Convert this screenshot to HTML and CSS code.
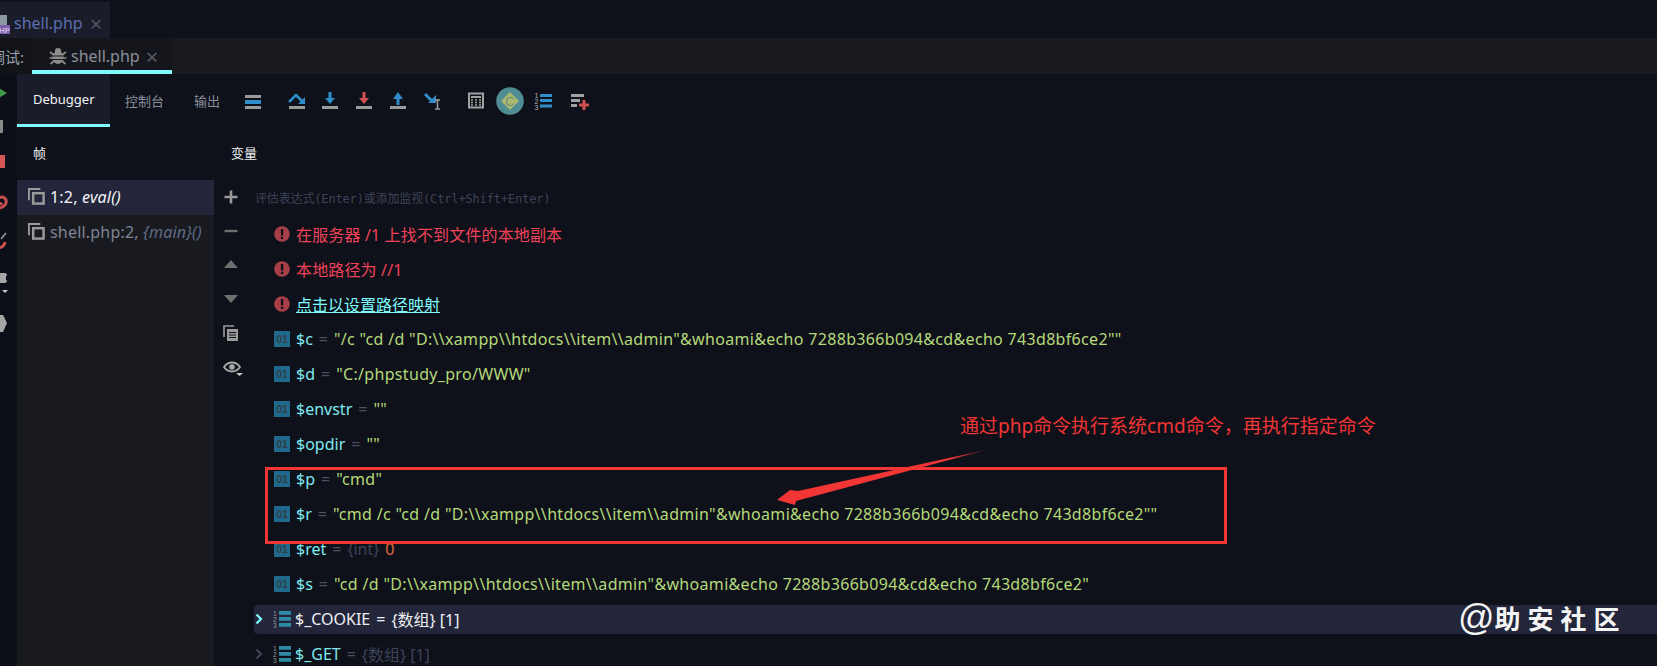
FILE: index.html
```html
<!DOCTYPE html>
<html lang="zh-CN">
<head>
<meta charset="utf-8">
<title>shell.php</title>
<link rel="stylesheet" href="styles.css">
</head>
<body>
<svg class="sprite" aria-hidden="true">
  <defs>
    <symbol id="frame" viewBox="0 0 18 18"><path d="M1 13V1h12" fill="none" stroke="#9a9a9a" stroke-width="2"/><rect x="5.500" y="5.500" width="11" height="11" fill="none" stroke="#9a9a9a" stroke-width="2.600"/></symbol>
    <symbol id="err" viewBox="0 0 16 16"><circle cx="8" cy="8" r="7.800" fill="#a63f48"/><rect x="6.900" y="3" width="2.300" height="6.400" fill="#0e1119"/><rect x="6.900" y="10.700" width="2.300" height="2.300" fill="#0e1119"/></symbol>
    <symbol id="arr" viewBox="0 0 18 18"><text x="0" y="5.500" class="tiny">1</text><text x="0" y="11.500" class="tiny">2</text><text x="0" y="17.500" class="tiny">3</text><rect x="6" y="1" width="12" height="3.800" fill="#2f8aa6"/><rect x="6" y="7" width="12" height="3.800" fill="#2f8aa6"/><rect x="6" y="13" width="12" height="3.800" fill="#2f8aa6"/></symbol>
    <symbol id="chev" viewBox="0 0 8 12"><path d="M1.500 1.500L6 6l-4.500 4.500" fill="none" stroke="currentColor" stroke-width="2.200"/></symbol>
    <linearGradient id="tail" x1="1" y1="0" x2="0" y2="1"><stop offset="0" stop-color="#4a1418"/><stop offset=".18" stop-color="#f23535"/></linearGradient>
  </defs>
</svg>

<div class="filetabs">
  <div class="filetab">
    <svg class="phpicon" width="10" height="20" viewBox="0 0 10 20"><rect x="-6" y="0" width="13" height="11" fill="#8b99a3"/><rect x="-6" y="10" width="16" height="9" fill="#7e5fae"/><text x="-1" y="18" class="phptxt">HP</text></svg>
    <span class="filename">shell.php</span>
    <span class="close">×</span>
  </div>
</div>

<div class="debugbar">
  <div class="debuglabel"><span>调试:</span></div>
  <div class="debugtab">
    <svg width="18" height="18" viewBox="0 0 18 18"><ellipse cx="9" cy="10.500" rx="5.600" ry="6.500" fill="#8c8c8c"/><circle cx="9" cy="4.200" r="3.100" fill="#8c8c8c"/><path d="M1 5l4 3M17 5l-4 3M.5 11h4M17.500 11h-4M1.500 17l3.500-3M16.500 17l-3.500-3" stroke="#8c8c8c" stroke-width="1.700"/><path d="M4 9h10M4 12.500h10" stroke="#181a1f" stroke-width="1"/></svg>
    <span class="debugname">shell.php</span>
    <span class="close dim">×</span>
  </div>
</div>

<div class="main">
  <svg class="rail" width="17" height="592" viewBox="0 0 17 592">
    <polygon points="-3,13 7,19 -3,25" fill="#3f9a4c"/>
    <rect x="0" y="46" width="3" height="13" fill="#8a8a8a"/>
    <rect x="0" y="81" width="5" height="13" fill="#d65656"/>
    <path d="M-4 127c3-5 8-5 10-1 1 4-2 7-6 8M-3 131c2-2 4-2 5 0" fill="none" stroke="#c8504f" stroke-width="3"/>
    <path d="M-3 172c3 3 7 1 8-4" fill="none" stroke="#c8504f" stroke-width="3"/>
    <path d="M1 165l5-6" stroke="#9a9a9a" stroke-width="1.600"/>
    <rect x="0" y="199" width="6" height="10" fill="#a6a6a6"/>
    <path d="M0 201h7M0 207h7" stroke="#a6a6a6" stroke-width="1.500"/>
    <polygon points="2,216 8,216 5,219" fill="#c8c8c8"/>
    <polygon points="0,241 3,241 7,249 3,258 0,258" fill="#a6a6a6"/>
  </svg>

  <div class="content">
    <div class="toolbar">
      <div class="ttab active">Debugger</div>
      <div class="ttab">控制台</div>
      <div class="ttab">输出</div>
      <div class="tools">
        <svg class="tool" viewBox="0 0 24 24"><rect x="4" y="6" width="16" height="3" fill="#9a9a9a"/><rect x="4" y="11" width="16" height="4" fill="#2f8ec9"/><rect x="4" y="17" width="16" height="3" fill="#9a9a9a"/></svg>
        <svg class="tool gapl" viewBox="0 0 24 24"><path d="M5 13l7-7 7 7" fill="none" stroke="#2f8ec9" stroke-width="2.600"/><polygon points="21,8 21,15 14,15" fill="#2f8ec9"/><rect x="5" y="17" width="16" height="3" fill="#9a9a9a"/></svg>
        <svg class="tool" viewBox="0 0 24 24"><rect x="10.500" y="3" width="3" height="8" fill="#2f8ec9"/><polygon points="7,9 17,9 12,15" fill="#2f8ec9"/><rect x="4" y="17" width="16" height="3" fill="#9a9a9a"/></svg>
        <svg class="tool" viewBox="0 0 24 24"><rect x="10.500" y="3" width="3" height="8" fill="#d0504f"/><polygon points="7,9 17,9 12,15" fill="#d0504f"/><rect x="4" y="17" width="16" height="3" fill="#9a9a9a"/></svg>
        <svg class="tool" viewBox="0 0 24 24"><rect x="10.500" y="8" width="3" height="8" fill="#2f8ec9"/><polygon points="7,10 17,10 12,3" fill="#2f8ec9"/><rect x="4" y="17" width="16" height="3" fill="#9a9a9a"/></svg>
        <svg class="tool" viewBox="0 0 24 24"><path d="M5 5l8 8" stroke="#2f8ec9" stroke-width="3"/><polygon points="16,6 16,14 8,14" fill="#2f8ec9"/><path d="M15 11h5M17.500 11v9M15 20h5" stroke="#9a9a9a" stroke-width="1.500" fill="none"/></svg>
        <svg class="tool gapm" viewBox="0 0 24 24"><rect x="5" y="4.500" width="14" height="14" fill="none" stroke="#a0a0a0" stroke-width="2"/><path d="M7 8h10" stroke="#a0a0a0" stroke-width="2"/><path d="M7 11h2M11 11h2M15 11h2M7 13.500h2M11 13.500h2M15 13.500h2M7 16h2M11 16h2M15 16h2" stroke="#a0a0a0" stroke-width="1.500"/></svg>
        <svg class="tool wide" viewBox="0 0 28 28"><circle cx="14" cy="14" r="13.800" fill="#4f8c94"/><polygon points="14,5 23,14 14,23 5,14" fill="#a9b96e"/><text x="14" y="18.500" class="ctext">C</text></svg>
        <svg class="tool" viewBox="0 0 24 24"><text x="2.500" y="9" class="num">1</text><text x="2.500" y="15" class="num">2</text><text x="2.500" y="21" class="num">3</text><rect x="8" y="5" width="12" height="3" fill="#2f8ec9"/><rect x="8" y="10" width="12" height="3" fill="#2f8ec9"/><rect x="8" y="15.500" width="12" height="3" fill="#2f8ec9"/></svg>
        <svg class="tool gaps" viewBox="0 0 24 24"><rect x="3" y="5" width="13" height="3" fill="#a0a0a0"/><rect x="3" y="10" width="9" height="3" fill="#a0a0a0"/><rect x="3" y="15" width="6" height="3" fill="#a0a0a0"/><path d="M16 11v10M11 16h10" stroke="#d0504f" stroke-width="3"/></svg>
      </div>
    </div>

    <div class="panes">
      <div class="framespane">
        <div class="panehead">帧</div>
        <div class="framelist">
          <div class="frame selected"><svg class="frameicon"><use href="#frame"/></svg><span>1:2, <i>eval()</i></span></div>
          <div class="frame"><svg class="frameicon"><use href="#frame"/></svg><span>shell.php:2, <i class="mainfn">{main}()</i></span></div>
        </div>
      </div>

      <div class="varspane">
        <div class="panehead">变量</div>
        <div class="varsbody">
          <div class="actions">
            <svg class="act" viewBox="0 0 16 16"><path d="M8 1.500v13M1.500 8h13" stroke="#9a9a9a" stroke-width="2.600"/></svg>
            <svg class="act" viewBox="0 0 16 16"><path d="M1.500 8h13" stroke="#6f6f6f" stroke-width="2.400"/></svg>
            <svg class="act" viewBox="0 0 16 16"><polygon points="8,3 15,11 1,11" fill="#6f6f6f"/></svg>
            <svg class="act" viewBox="0 0 16 16"><polygon points="1,4 15,4 8,12" fill="#6f6f6f"/></svg>
            <svg class="act" viewBox="0 0 16 16"><path d="M1 12V1h10" fill="none" stroke="#9a9a9a" stroke-width="1.600"/><rect x="4" y="4" width="11" height="12" fill="#9a9a9a"/><path d="M6 7.500h7M6 10h7M6 12.500h7" stroke="#0e1119" stroke-width="1.200"/></svg>
            <svg class="act eye" viewBox="0 0 20 16"><path d="M1 6c4-6 12-6 16 0-4 6-12 6-16 0z" fill="none" stroke="#a8a8a8" stroke-width="1.800"/><circle cx="9" cy="6" r="2.800" fill="#a8a8a8"/><polygon points="13,12 20,12 16.500,15" fill="#c8c8c8"/></svg>
          </div>
          <div class="vars">
            <div class="watch">评估表达式(Enter)或添加监视(Ctrl+Shift+Enter)</div>
            <div class="row"><svg class="ico"><use href="#err"/></svg><span class="error">在服务器 /1 上找不到文件的本地副本</span></div>
            <div class="row"><svg class="ico"><use href="#err"/></svg><span class="error">本地路径为 //1</span></div>
            <div class="row"><svg class="ico"><use href="#err"/></svg><span class="link">点击以设置路径映射</span></div>
            <div class="row"><span class="bin">01</span><span class="name">$c</span><span class="eq">=</span><span class="str">"/c "cd /d "D:\\xampp\\htdocs\\item\\admin"&amp;whoami&amp;echo 7288b366b094&amp;cd&amp;echo 743d8bf6ce2""</span></div>
            <div class="row"><span class="bin">01</span><span class="name">$d</span><span class="eq">=</span><span class="str">"C:/phpstudy_pro/WWW"</span></div>
            <div class="row"><span class="bin">01</span><span class="name">$envstr</span><span class="eq">=</span><span class="str">""</span></div>
            <div class="row"><span class="bin">01</span><span class="name">$opdir</span><span class="eq">=</span><span class="str">""</span></div>
            <div class="row"><span class="bin">01</span><span class="name">$p</span><span class="eq">=</span><span class="str">"cmd"</span></div>
            <div class="row"><span class="bin">01</span><span class="name">$r</span><span class="eq">=</span><span class="str">"cmd /c "cd /d "D:\\xampp\\htdocs\\item\\admin"&amp;whoami&amp;echo 7288b366b094&amp;cd&amp;echo 743d8bf6ce2""</span></div>
            <div class="row"><span class="bin">01</span><span class="name">$ret</span><span class="eq">=</span><span class="type">{int}</span><span class="int">0</span></div>
            <div class="row"><span class="bin">01</span><span class="name">$s</span><span class="eq">=</span><span class="str">"cd /d "D:\\xampp\\htdocs\\item\\admin"&amp;whoami&amp;echo 7288b366b094&amp;cd&amp;echo 743d8bf6ce2"</span></div>
            <div class="row hl"><svg class="chev on"><use href="#chev"/></svg><svg class="ico arr"><use href="#arr"/></svg><span class="name white">$_COOKIE</span><span class="eq white">=</span><span class="white">{数组} [1]</span></div>
            <div class="row"><svg class="chev"><use href="#chev"/></svg><svg class="ico arr"><use href="#arr"/></svg><span class="name">$_GET</span><span class="eq">=</span><span class="type">{数组} [1]</span></div>
          </div>
        </div>
      </div>
    </div>
  </div>
</div>

<div class="redbox"></div>
<svg class="arrow" width="230" height="70" viewBox="0 0 230 70"><polygon points="220,2 28,44 20,43 7,53 25,58 26,54" fill="url(#tail)"/></svg>
<div class="note">通过php命令执行系统cmd命令，再执行指定命令</div>
<div class="mark">@<span class="markcn">助安社区</span></div>
</body>
</html>
```
FILE: styles.css
```css
* { box-sizing: border-box; }
html, body { margin: 0; height: 666px; overflow: hidden; }
body {
  position: relative;
  background: #0e1119;
  color: #c8ccd4;
  font-family: "Noto Sans", "Noto Sans CJK SC", sans-serif;
  font-size: 16px;
}
.sprite { position: absolute; width: 0; height: 0; }
.tiny { font: 6.500px "Liberation Sans", sans-serif; fill: #9a9a9a; }
.phptxt { font: bold 8px "Liberation Sans", sans-serif; fill: #c8b8e0; }
.num { font: 7px "Liberation Sans", sans-serif; fill: #b0b0b0; }
.ctext { font: 13px "Liberation Sans", sans-serif; fill: #6f8f7f; text-anchor: middle; }

.filetabs { height: 38px; padding-top: 2px; background: #0e1119; }
.filetab {
  width: 110px; height: 36px;
  display: flex; align-items: center; gap: 4px;
  padding-top: 5px;
  background: #1a1d29;
}
.phpicon { flex: none; margin-top: 4px; }
.filename { font-size: 16px; color: #5a6db0; }
.close { margin-left: 3px; font-size: 22px; line-height: 1; color: #4c5166; }
.close.dim { color: #565a66; }

.debugbar { height: 36px; display: flex; background: #181a1f; }
.debuglabel {
  width: 32px; height: 36px; overflow: hidden;
  display: flex; justify-content: flex-end; align-items: center;
  padding-right: 8px; background: #111319;
  font-size: 15px; color: #9aa0ac; white-space: nowrap;
}
.debuglabel span { flex: none; }
.debugtab {
  width: 140px; height: 36px;
  display: flex; align-items: center; gap: 4px;
  padding: 3px 0 0 17px;
  border-bottom: 4px solid #7ffcff;
  background: #14161c;
}
.debugname { font-size: 16px; color: #8b9099; }
.debugtab .close { margin-left: 2px; }

.main { display: flex; height: 592px; }
.rail { flex: none; background: #0c0f17; }
.content { flex: 1; min-width: 0; display: flex; flex-direction: column; }

.toolbar { height: 53px; display: flex; align-items: center; flex: none; }
.ttab {
  height: 53px; padding: 0 15px;
  display: flex; align-items: center;
  font-size: 13px; color: #8a8f9b;
}
.ttab.active {
  width: 93px; padding: 0 0 0 16px;
  background: #1a1d29; color: #f2f4f8;
  border-bottom: 3px solid #7ffcff;
}
.tools { display: flex; align-items: center; gap: 10px; margin-left: 6px; }
.tool { width: 24px; height: 24px; flex: none; }
.tool.wide { width: 28px; height: 28px; margin: 0 -2px; }
.gapl { margin-left: 9px; }
.gapm { margin-left: 10px; }
.gaps { margin-left: 2px; }

.panes { flex: 1; min-height: 0; display: flex; }
.panehead {
  height: 53px; display: flex; align-items: center;
  padding-bottom: 2px;
  font-size: 13px; color: #f0f2f6;
}
.framespane { width: 197px; flex: none; display: flex; flex-direction: column; }
.framespane .panehead { padding-left: 16px; }
.framelist { flex: 1; background: #191a1f; }
.frame {
  height: 35px; padding: 0 0 2px 11px;
  display: flex; align-items: center; gap: 5px;
  font-size: 16px; color: #7d8596; letter-spacing: .2px; white-space: nowrap;
}
.frame.selected { background: #23263a; color: #f2f4f8; }
.frameicon { width: 17px; height: 17px; flex: none; }
.mainfn { color: #5e6b86; }

.varspane { flex: 1; min-width: 0; display: flex; flex-direction: column; }
.varspane .panehead { padding-left: 17px; }
.varsbody { flex: 1; min-height: 0; display: flex; }
.actions {
  width: 26px; flex: none;
  display: flex; flex-direction: column; align-items: center;
  padding-left: 8px;
}
.act { width: 16px; height: 16px; margin: 9px 0; flex: none; }
.act.eye { width: 20px; margin: 11px 0 0 3px; }
.vars { flex: 1; min-width: 0; }
.watch {
  height: 40px; padding: 0 0 6px 15px;
  display: flex; align-items: center;
  font: 12px "DejaVu Sans Mono", "Noto Sans CJK SC", monospace;
  letter-spacing: -.15px;
  color: #3d4357;
}
.row {
  height: 29px; margin: 0 0 6px 14px; padding: 0 0 2px 20px;
  display: flex; align-items: center; gap: 6px;
  white-space: nowrap; border-radius: 4px 0 0 4px;
  position: relative;
}
.ico { width: 16px; height: 16px; flex: none; }
.ico.arr { width: 18px; height: 18px; margin: 0 -2px 0 -1px; }
.bin {
  width: 16px; height: 16px; flex: none;
  display: flex; align-items: center; justify-content: center;
  background: #1f6a8c; color: #2f3f48;
  font: bold 10.500px "Liberation Sans", sans-serif;
}
.error { color: #f1425a; letter-spacing: .15px; }
.link { color: #7ffcff; text-decoration: underline; }
.name { color: #7fe9f0; }
.eq { color: #4a5060; }
.str { color: #b5d97b; letter-spacing: .32px; }
.type { color: #3d4357; }
.int { color: #e0693f; }
.white { color: #eef0f4; }
.hl { background: #23263a; }
.chev {
  position: absolute; left: 1px; top: 8px;
  width: 8px; height: 12px;
  color: #3d4357;
}
.chev.on { color: #7ffcff; }

.redbox {
  position: absolute; left: 265px; top: 467px;
  width: 962px; height: 77px;
  border: 3px solid #f23535;
}
.arrow { position: absolute; left: 770px; top: 447px; }
.note {
  position: absolute; left: 960px; top: 411px;
  font-size: 19px; line-height: 30px; color: #f23535;
  white-space: nowrap;
}
.mark {
  position: absolute; left: 1458px; top: 596px;
  display: flex; align-items: center;
  font: 36px/44px "Liberation Sans", sans-serif; color: #f4f4f4;
}
.markcn {
  font: 700 26px/44px "Noto Sans CJK SC", sans-serif;
  letter-spacing: 7px;
}
```
